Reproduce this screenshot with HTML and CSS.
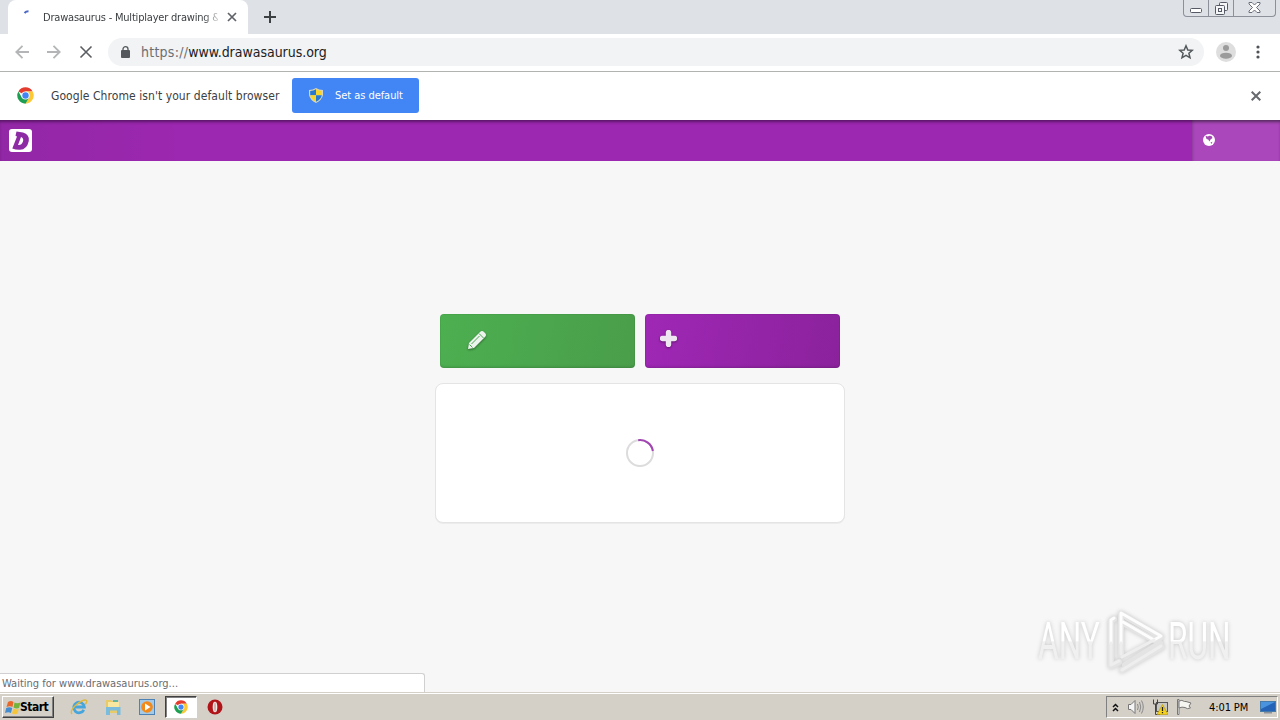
FILE: index.html
```html
<!DOCTYPE html>
<html lang="en">
<head>
    <meta charset="UTF-8">
    <meta name="viewport" content="width=device-width, initial-scale=1.0">
    <title>Drawasaurus - Multiplayer drawing</title>
    <link rel="stylesheet" href="styles.css">
</head>
<body>
    <svg class="defs" width="0" height="0">
        <symbol id="chrome" viewBox="0 0 48 48">
            <circle cx="24" cy="24" r="23" fill="#fff"/>
            <path d="M24 24L4 12.5A23 23 0 0 1 44 12.5H24Z" fill="#e33b2e"/>
            <path d="M24 12.5H44A23 23 0 0 1 24 47L34 30Z" fill="#fcc934"/>
            <path d="M4 12.5A23 23 0 0 0 24 47L34 30L24 34L14 30Z" fill="#1e9e50"/>
            <circle cx="24" cy="24" r="11.5" fill="#fff"/>
            <circle cx="24" cy="24" r="9" fill="#4285f4"/>
        </symbol>
    </svg>

    <div class="tabstrip">
        <div class="tab">
            <svg class="tab-spinner" width="16" height="16"><path d="M3.500 5Q5 3.300 7.500 3.300" stroke="#4a68c8" stroke-width="2" fill="none"/></svg>
            <span class="tab-title">Drawasaurus - Multiplayer drawing &amp;</span>
            <svg class="tab-close" width="10" height="10"><path d="M1 1L9 9M9 1L1 9" stroke="#5f6368" stroke-width="1.700"/></svg>
        </div>
        <svg class="new-tab" width="12" height="12"><path d="M6 0V12M0 6H12" stroke="#3c4043" stroke-width="2"/></svg>
        <div class="window-buttons">
            <span class="win-min"><svg width="12" height="5"><rect x=".5" y=".5" width="11" height="4" rx="1" fill="#fff" stroke="#555a65"/></svg></span>
            <span class="win-max"><svg width="13" height="13" fill="#f5f6f8" stroke="#555a65"><rect x="4.500" y=".5" width="8" height="8" rx="1"/><rect x=".5" y="3.500" width="9" height="9" rx="1"/><rect x="3.500" y="6.500" width="3" height="3"/></svg></span>
            <span class="win-close"><svg width="13" height="11"><path d="M1 .5H4L6.500 3L9 .5H12V2L8.500 5.500L12 9V10.500H9L6.500 8L4 10.500H1V9L4.500 5.500L1 2Z" fill="#fff" stroke="#6a6e78"/></svg></span>
        </div>
    </div>

    <div class="toolbar">
        <svg class="nav" width="14" height="14"><path d="M14 7H1.500M7.500 .8L1.300 7L7.500 13.200" stroke="#b4b5b7" stroke-width="1.800" fill="none"/></svg>
        <svg class="nav" width="14" height="14"><path d="M0 7H12.500M6.500 .8L12.700 7L6.500 13.200" stroke="#b4b5b7" stroke-width="1.800" fill="none"/></svg>
        <svg class="nav" width="14" height="14"><path d="M1.500 1.500L12.500 12.500M12.500 1.500L1.500 12.500" stroke="#5a5d61" stroke-width="1.600"/></svg>
        <div class="omnibox">
            <svg width="9" height="12"><rect y="4" width="9" height="8" rx="1" fill="#55585c"/><path d="M2 5V3a2.500 2.300 0 0 1 5 0V5" fill="none" stroke="#55585c" stroke-width="1.300"/></svg>
            <span class="url"><span class="scheme">https://</span>www.drawasaurus.org</span>
            <svg class="star" width="16" height="16" viewBox="0 0 16 16"><path d="M8 1.800L9.800 6L14.300 6.300L10.900 9.300L12 13.800L8 11.400L4 13.800L5.100 9.300L1.700 6.300L6.200 6Z" fill="none" stroke="#54585c" stroke-width="1.500"/></svg>
        </div>
        <svg class="avatar" width="20" height="20"><circle cx="10" cy="10" r="10" fill="#dedede"/><circle cx="10" cy="6" r="3" fill="#9b9b9b"/><ellipse cx="10" cy="13.700" rx="6" ry="3" fill="#9b9b9b"/></svg>
        <svg class="menu" width="4" height="14" fill="#4f5357"><circle cx="2" cy="2" r="1.600"/><circle cx="2" cy="7" r="1.600"/><circle cx="2" cy="12" r="1.600"/></svg>
    </div>

    <div class="infobar">
        <svg width="17" height="17"><use href="#chrome"/></svg>
        <span class="infobar-text">Google Chrome isn't your default browser</span>
        <div class="default-btn">
            <svg width="14" height="15" viewBox="0 0 14 15">
                <path d="M7 0Q10 2 14 2V7Q13 12 7 15Q1 12 0 7V2Q4 2 7 0Z" fill="#d8d5b8"/>
                <path d="M7 1.300V7.300H1.200V3Q4.500 3 7 1.300Z" fill="#2878cf"/>
                <path d="M7 1.300Q9.500 3 12.800 3V7.300H7Z" fill="#f7d52b"/>
                <path d="M1.200 7.300H7V13.800Q2 11.500 1.200 7.300Z" fill="#f7d52b"/>
                <path d="M7 7.300H12.800Q12 11.500 7 13.800Z" fill="#2878cf"/>
            </svg>
            <span>Set as default</span>
        </div>
        <svg class="infobar-close" width="10" height="10"><path d="M.7 .7L9.300 9.300M9.300 .7L.7 9.300" stroke="#66696d" stroke-width="2"/></svg>
    </div>

    <div class="site-header">
        <svg class="logo" width="23" height="23"><rect width="23" height="23" rx="3" fill="#fff"/><path fill-rule="evenodd" d="M7.500 2.500L14 3.500Q20.800 5.500 19.800 12Q18 20.500 11 20.800Q7 21 3.300 19.500L8 7.500L6.500 6.800ZM12 8L9 16Q12.500 16.500 14 12.500Q15 9 12 8Z" fill="#8c2ba3"/></svg>
        <div class="language">
            <svg width="12" height="12"><circle cx="6" cy="6" r="6" fill="#fff"/><path d="M2.500 1.800L5 2.500L6 1.800L8.500 2L9.500 4L7.500 5.500L6.500 7.500L5.200 5.600L3.500 5ZM7.500 8.500L9.500 7.800L8.500 10Z" fill="#a449b3"/></svg>
        </div>
    </div>

    <div class="content">
        <div class="buttons">
            <div class="btn btn-play">
                <svg width="20" height="20" viewBox="0 0 20 20"><path d="M1 19L2 13L13 2Q15 0 17 2L18 3Q20 5 18 7L7 18Z" fill="#edf4ed"/><path d="M12 3.500L16.500 8M4.500 14L12.500 6M2.500 14.500L5.500 17.500" stroke="#4ba64f" stroke-width="1" fill="none"/></svg>
            </div>
            <div class="btn btn-create">
                <svg width="17" height="17"><path d="M8.500 2.500V14.500M2.500 8.500H14.500" stroke="#eee6f0" stroke-width="5.400" stroke-linecap="round"/></svg>
            </div>
        </div>
        <div class="panel">
            <svg width="28" height="28"><circle cx="14" cy="14" r="13" fill="none" stroke="#dcdcdc" stroke-width="2"/><path d="M12.200 1.200A13 13 0 0 1 26.900 12" fill="none" stroke="#a344b3" stroke-width="2"/></svg>
        </div>
        <div class="watermark">
            <span class="wm-any">ANY</span>
            <svg width="60" height="66" viewBox="0 0 60 66" fill="none" stroke-linecap="round" stroke-linejoin="round">
                <g stroke="#e4e4e4" stroke-width="6">
                    <path d="M7 10L4 12V57L12 53M14 46V5L54 28L47 31L16 14M53 34L18 56M15 61L55 38"/>
                </g>
                <path d="M7 9L4 11V34M14 34V4L54 27L47 31L16 13" stroke="#fdfdfd" stroke-width="3"/>
                <path d="M4 34V56L12 52M14 34V45M15 48L47 31M15 61L54 37" stroke="#eeeeee" stroke-width="3"/>
            </svg>
            <span class="wm-run">RUN</span>
        </div>
        <div class="status">Waiting for www.drawasaurus.org...</div>
    </div>

    <div class="taskbar">
        <div class="start">
            <svg width="16" height="15" viewBox="0 0 16 15"><path d="M3 2Q6 0 8.500 2L7.500 7Q5 5.500 1.500 7Z" fill="#e8682c"/><path d="M9.500 2.500Q12 4 15.500 2.500L14 8Q11 9 8.500 7.500Z" fill="#74b43c"/><path d="M1.200 8Q4.500 6.500 7.200 8L6 13Q3.500 11.500 0 13Z" fill="#438ccf"/><path d="M8.300 8.500Q11 10 13.800 9L12.500 13.500Q9.500 15 7 13.500Z" fill="#f7c638"/></svg>
            <span>Start</span>
        </div>
        <div class="quick ie">
            <svg width="18" height="18" viewBox="0 0 18 18" fill="none"><path d="M13.800 11.800A5.300 5.300 0 1 1 14.300 9H5" stroke="#45a5dc" stroke-width="2.800"/><path d="M2 16Q-.5 13 6 7Q14 .5 16.500 2.500Q17.500 4 15 6.500" stroke="#dfb83c" stroke-width="1.400"/></svg>
        </div>
        <div class="quick explorer">
            <svg width="16" height="16" viewBox="0 0 16 16"><path d="M1 1H6L7 2H13V14H1Z" fill="#e8cb68"/><rect x="3" y="3" width="11" height="7" fill="#f8e7a0"/><path d="M1 8H15.500V16H12V11.500H5V16H1Z" fill="#7bbbdc"/><rect x="8" y="1" width="5" height="2" fill="#62b59a"/></svg>
        </div>
        <div class="quick media">
            <svg width="16" height="16"><rect x=".5" y=".5" width="15" height="15" fill="#a5cae8" stroke="#4d82b5"/><circle cx="8" cy="8" r="5.800" fill="#f28a1b"/><path d="M6 4.500L11.500 8L6 11.500Z" fill="#fff"/></svg>
        </div>
        <div class="quick active">
            <svg width="14" height="14"><use href="#chrome"/></svg>
        </div>
        <div class="quick opera">
            <svg width="16" height="16"><circle cx="8" cy="8" r="7.500" fill="#b01419"/><ellipse cx="8" cy="8" rx="2.300" ry="5.300" fill="#f4e9e6"/><ellipse cx="8" cy="8" rx="1" ry="4.800" fill="#d0b5b2"/></svg>
        </div>
        <div class="tray">
            <svg class="chevrons" width="7" height="9"><path d="M1 4L3.500 1.500L6 4M1 8L3.500 5.500L6 8" fill="none" stroke="#111" stroke-width="1.500"/></svg>
            <svg width="17" height="16" fill="none"><path d="M1.500 5.500H4L8 1.500V14.500L4 10.500H1.500Z" fill="#f5f5f5" stroke="#777"/><path d="M10.500 5Q12 8 10.500 11M12.500 3Q15 8 12.500 13M14.500 1.500Q18 8 14.500 14.500" stroke="#888"/></svg>
            <svg width="16" height="16"><rect x="4.500" y="3.500" width="11" height="9" fill="#c9c9c3" stroke="#555"/><path d="M1.500 .5V5H5.500V.5M3.500 5V15.500H8" fill="none" stroke="#444" stroke-width="1"/><path d="M10.500 5.500L16 15.500H5Z" fill="#f4d21d" stroke="#b89400" stroke-width=".6"/><path d="M10.500 8V12M10.500 13V14.300" stroke="#222" stroke-width="1.300"/></svg>
            <svg class="flag" width="16" height="16"><path d="M1.500 .5H3V15.500H1.500Z" fill="#fff" stroke="#777"/><path d="M3 2Q6 .5 8.500 2.500H10L15 4L13 7L14.500 9Q11 10.500 9 8.500Q6 7.500 3 9Z" fill="#f5f5f2" stroke="#777"/></svg>
            <span class="clock">4:01 PM</span>
            <svg width="16" height="14"><rect x=".5" y="1.500" width="15" height="10" fill="#2463b5" stroke="#477ba9"/><path d="M1 2H15L1 9Z" fill="#4a94df"/><path d="M4 12H12V13.500H4Z" fill="#8c9298"/></svg>
        </div>
    </div>
</body>
</html>
```
FILE: styles.css
```css
* {
    box-sizing: border-box;
}
body {
    margin: 0;
    width: 1280px;
    height: 720px;
    overflow: hidden;
    display: flex;
    flex-direction: column;
    font-family: "DejaVu Sans Condensed", "DejaVu Sans", sans-serif;
    font-size: 11px;
    color: #3c4043;
    background-color: #f7f7f7;
}
svg {
    display: block;
    flex-shrink: 0;
}
.defs {
    position: absolute;
}

/* browser */
.tabstrip {
    height: 34px;
    flex-shrink: 0;
    display: flex;
    background-color: #dee1e6;
    padding-left: 8px;
}
.tab {
    width: 240px;
    height: 34px;
    background-color: #fff;
    border-radius: 8px 8px 0 0;
    display: flex;
    align-items: center;
    padding-left: 13px;
}
.tab-spinner {
    margin-top: -3px;
}
.tab-title {
    width: 175px;
    margin-left: 6px;
    white-space: nowrap;
    overflow: hidden;
    letter-spacing: -0.2px;
    -webkit-mask-image: linear-gradient(to right, #000 160px, transparent 180px);
}
.tab-close {
    margin-left: 9px;
}
.new-tab {
    margin: 11px 0 0 16px;
}
.window-buttons {
    width: 93px;
    height: 17px;
    margin-left: auto;
    margin-right: 4px;
    display: flex;
    border: 1px solid #8c9099;
    border-top: none;
    border-radius: 0 0 4px 4px;
}
.window-buttons span {
    width: 25px;
    display: flex;
    justify-content: center;
    padding-top: 2px;
    border-right: 1px solid #8c9099;
}
.window-buttons .win-min {
    padding-top: 8px;
}
.window-buttons .win-close {
    flex: 1;
    border-right: none;
}
.toolbar {
    height: 38px;
    flex-shrink: 0;
    display: flex;
    align-items: center;
    background-color: #fff;
    border-bottom: 1px solid #b0b3b0;
    padding: 0 0 1px 15px;
}
.nav {
    margin-right: 18px;
}
.omnibox {
    width: 1096px;
    height: 28px;
    margin-left: -3px;
    border-radius: 14px;
    background-color: #f1f3f4;
    display: flex;
    align-items: center;
    padding: 0 10px 0 13px;
}
.url {
    margin-left: 11px;
    font-size: 14px;
    letter-spacing: -0.03px;
    color: #202124;
}
.scheme {
    color: #6b6f73;
    letter-spacing: 0.25px;
}
.star {
    margin-left: auto;
}
.avatar {
    margin-left: 12px;
}
.menu {
    margin-left: 20px;
}
.infobar {
    height: 48px;
    flex-shrink: 0;
    display: flex;
    align-items: center;
    background-color: #fff;
    padding: 0 19px 1px 17px;
}
.infobar-text {
    width: 241px;
    margin-left: 17px;
    font-size: 12px;
    letter-spacing: 0.07px;
    white-space: nowrap;
}
.default-btn {
    width: 127px;
    height: 35px;
    border-radius: 3px;
    background-color: #4285f4;
    color: #fff;
    display: flex;
    align-items: center;
    padding-left: 17px;
    letter-spacing: -0.05px;
}
.default-btn span {
    margin-left: 12px;
}
.infobar-close {
    margin-left: auto;
}

/* page */
.site-header {
    height: 41px;
    flex-shrink: 0;
    display: flex;
    align-items: center;
    justify-content: space-between;
    background: linear-gradient(to right, #9227a5, #9c27b0 180px);
    box-shadow: inset 0 3px 3px -1px #5a1767;
    padding-left: 9px;
}
.language {
    width: 88px;
    height: 41px;
    padding: 14px 0 0 11px;
    background-color: rgba(255, 255, 255, 0.15);
    box-shadow: inset 3px 0 3px -2px rgba(0, 0, 0, 0.15), inset 0 3px 3px -1px rgba(0, 0, 0, 0.2);
}
.content {
    position: relative;
    flex: 1;
    display: flex;
    flex-direction: column;
    align-items: center;
    padding-top: 153px;
}
.buttons {
    display: flex;
    gap: 10px;
}
.btn {
    width: 195px;
    height: 54px;
    border-radius: 4px;
    box-shadow: inset 0 0 0 1px rgba(0, 0, 0, 0.05), inset 0 -3px 2px -1px rgba(0, 0, 0, 0.08);
}
.btn-play {
    background: linear-gradient(100deg, #4caf50, #4a9e4a);
    padding: 16px 0 0 27px;
}
.btn-create {
    background: linear-gradient(100deg, #9f27b5, #8b229c);
    padding: 16px 0 0 15px;
}
.btn svg {
    filter: drop-shadow(0 1px 1px rgba(0, 0, 0, 0.4));
}
.panel {
    width: 410px;
    height: 140px;
    margin-top: 15px;
    background-color: #fff;
    border: 1px solid #e4e4e4;
    box-shadow: 0 1px 0 #ececec;
    border-radius: 8px;
    display: flex;
    align-items: center;
    justify-content: center;
}
.watermark {
    position: absolute;
    left: 1038px;
    top: 448px;
    display: flex;
    align-items: center;
    font-family: Roboto, "Liberation Sans", sans-serif;
    font-size: 51px;
    line-height: 66px;
    filter: drop-shadow(0 0 2px rgba(0, 0, 0, 0.2));
}
.watermark span {
    color: transparent;
    background: linear-gradient(to bottom, #ffffff 48%, #f0f0f0 50%);
    -webkit-background-clip: text;
    background-clip: text;
    transform: scaleX(0.62);
    transform-origin: left;
}
.wm-any {
    width: 104px;
    margin-right: -35px;
}
.wm-run {
    width: 110px;
    margin-left: 1px;
}
.status {
    position: absolute;
    left: 0;
    bottom: 1px;
    width: 425px;
    height: 19px;
    padding-left: 2px;
    line-height: 19px;
    background-color: #fff;
    border: 1px solid #d0d0d0;
    border-left: none;
    border-bottom: none;
    border-radius: 0 3px 0 0;
    color: #6a6c6f;
    letter-spacing: 0.01px;
}

/* taskbar */
.taskbar {
    position: relative;
    height: 27px;
    flex-shrink: 0;
    display: flex;
    align-items: center;
    background-color: #d4d0c8;
    box-shadow: 0 -1px 0 #d4d0c8, inset 0 1px 0 #fff;
    padding: 1px 2px 0 2px;
}
.start {
    width: 52px;
    height: 22px;
    display: flex;
    align-items: center;
    padding-left: 2px;
    border: 1px solid;
    border-color: #fff #404040 #404040 #fff;
    box-shadow: inset -1px -1px 0 #808080;
    font-size: 12px;
    font-weight: bold;
    letter-spacing: -0.5px;
    color: #000;
}
.start span {
    margin-left: -1px;
}
.quick {
    width: 32px;
    height: 22px;
    margin-left: 2px;
    display: flex;
    align-items: center;
    justify-content: center;
}
.ie {
    margin-left: 9px;
}
.active {
    background-color: #fff;
    border: 1px solid;
    border-color: #404040 #fff #fff #404040;
    box-shadow: inset 1px 1px 0 #808080;
}
.tray {
    width: 172px;
    height: 22px;
    margin-left: auto;
    display: flex;
    align-items: center;
    padding-left: 5px;
    gap: 8px;
    border: 1px solid;
    border-color: #808080 #fff #fff #808080;
    color: #000;
}
.clock {
    width: 42px;
    margin-left: 9px;
    margin-right: 1px;
    white-space: nowrap;
    letter-spacing: -0.1px;
}
```
